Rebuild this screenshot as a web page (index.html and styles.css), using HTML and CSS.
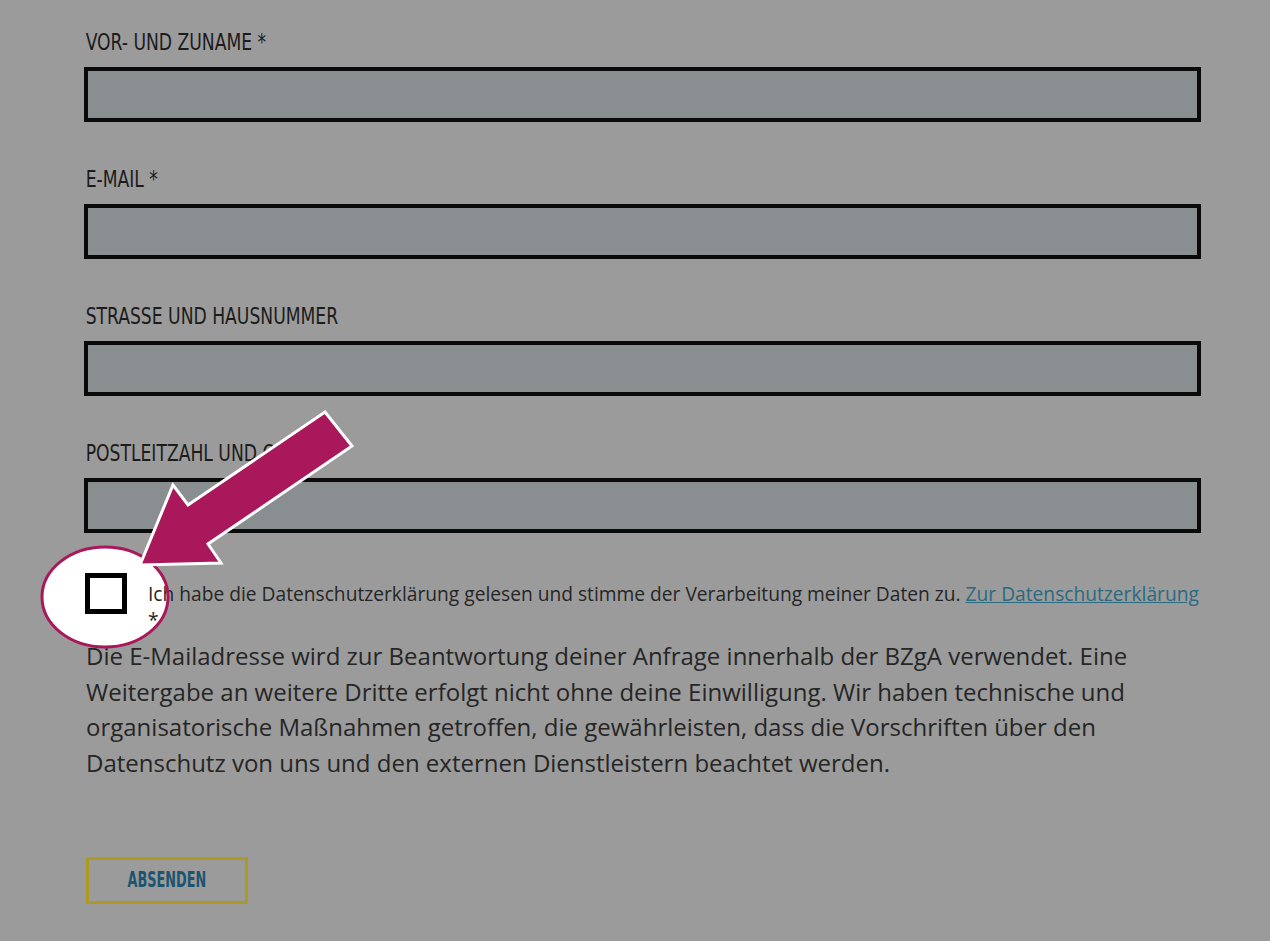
FILE: index.html
```html
<!DOCTYPE html>
<html lang="de">
<head>
<meta charset="utf-8">
<title>Kontaktformular</title>
<link rel="stylesheet" href="styles.css">
</head>
<body>
<main class="page">
  <svg class="spotlight" width="1270" height="941" viewBox="0 0 1270 941">
    <ellipse cx="105" cy="597" rx="63" ry="50" fill="#ffffff"/>
  </svg>
  <form class="form">
    <div class="field">
      <label class="label"><span class="label-text">VOR- UND ZUNAME *</span></label>
      <div class="input"></div>
    </div>
    <div class="field">
      <label class="label"><span class="label-text">E-MAIL *</span></label>
      <div class="input"></div>
    </div>
    <div class="field">
      <label class="label"><span class="label-text">STRASSE UND HAUSNUMMER</span></label>
      <div class="input"></div>
    </div>
    <div class="field">
      <label class="label"><span class="label-text">POSTLEITZAHL UND ORT</span></label>
      <div class="input"></div>
    </div>
    <div class="consent">
      <div class="checkbox"></div>
      <div class="consent-text">Ich habe die Datenschutzerklärung gelesen und stimme der Verarbeitung meiner Daten zu. <a class="link" href="#">Zur Datenschutzerklärung</a><br>*</div>
    </div>
    <p class="note">Die E-Mailadresse wird zur Beantwortung deiner Anfrage innerhalb der BZgA verwendet. Eine Weitergabe an weitere Dritte erfolgt nicht ohne deine Einwilligung. Wir haben technische und organisatorische Maßnahmen getroffen, die gewährleisten, dass die Vorschriften über den Datenschutz von uns und den externen Dienstleistern beachtet werden.</p>
    <div class="actions"><span class="button"><span class="button-text">ABSENDEN</span></span></div>
  </form>
  <svg class="annotation" width="1270" height="941" viewBox="0 0 1270 941">
    <ellipse cx="105" cy="597" rx="63" ry="50" fill="none" stroke="#a8185a" stroke-width="3"/>
    <polygon points="140,565 173,485 188,505 325,412 352,446 208,544 221,563" fill="#a8185a" stroke="#ffffff" stroke-width="3" stroke-linejoin="miter"/>
  </svg>
</main>
</body>
</html>
```
FILE: styles.css
```css
html, body {
  margin: 0;
  padding: 0;
  background: #9b9b9b;
}
body {
  width: 1270px;
  height: 941px;
  overflow: hidden;
  font-family: "Open Sans", "DejaVu Sans", sans-serif;
  color: #262626;
}
.page {
  position: relative;
  width: 1270px;
  height: 941px;
}
.spotlight {
  position: absolute;
  left: 0;
  top: 0;
  z-index: 0;
}
.form {
  position: relative;
  z-index: 1;
  padding: 30px 0 0 84px;
  width: 1117px;
}
.field {
  margin-bottom: 45px;
}
.label {
  display: block;
  height: 24px;
  line-height: 24px;
  margin-bottom: 13px;
  font-family: "DejaVu Sans Condensed", "DejaVu Sans", sans-serif;
  font-stretch: condensed;
  font-size: 23px;
  color: #1c1c1c;
  white-space: nowrap;
}
.label-text {
  display: inline-block;
  transform: scaleX(0.83);
  transform-origin: left center;
  padding-left: 2px;
}
.input {
  height: 47px;
  border: 4px solid #0a0a0a;
  background: #898e90;
}
.consent {
  display: flex;
  align-items: flex-start;
  gap: 21px;
  margin-top: -5px;
  padding-left: 1px;
}
.checkbox {
  width: 32px;
  height: 31px;
  border: 5px solid #000;
  background: #fff;
  flex: none;
}
.consent-text {
  font-size: 19.2px;
  line-height: 26px;
  padding-top: 8px;
  color: #262626;
  white-space: nowrap;
}
.link {
  color: #2b6a80;
  text-decoration: underline;
}
.note {
  margin: 5px 0 0;
  padding-left: 2px;
  font-size: 24px;
  line-height: 35.7px;
  color: #262626;
}
.actions {
  margin-top: 76px;
  padding-left: 2px;
  display: flex;
}
.button {
  display: flex;
  align-items: center;
  justify-content: center;
  width: 156px;
  height: 41px;
  border: 3px solid #ad9a22;
}
.button-text {
  display: inline-block;
  font-family: "DejaVu Sans Condensed", "DejaVu Sans", sans-serif;
  font-weight: bold;
  font-size: 21px;
  color: #1d5571;
  transform: scaleX(0.68);
}
.annotation {
  position: absolute;
  left: 0;
  top: 0;
  z-index: 2;
  pointer-events: none;
}
```
